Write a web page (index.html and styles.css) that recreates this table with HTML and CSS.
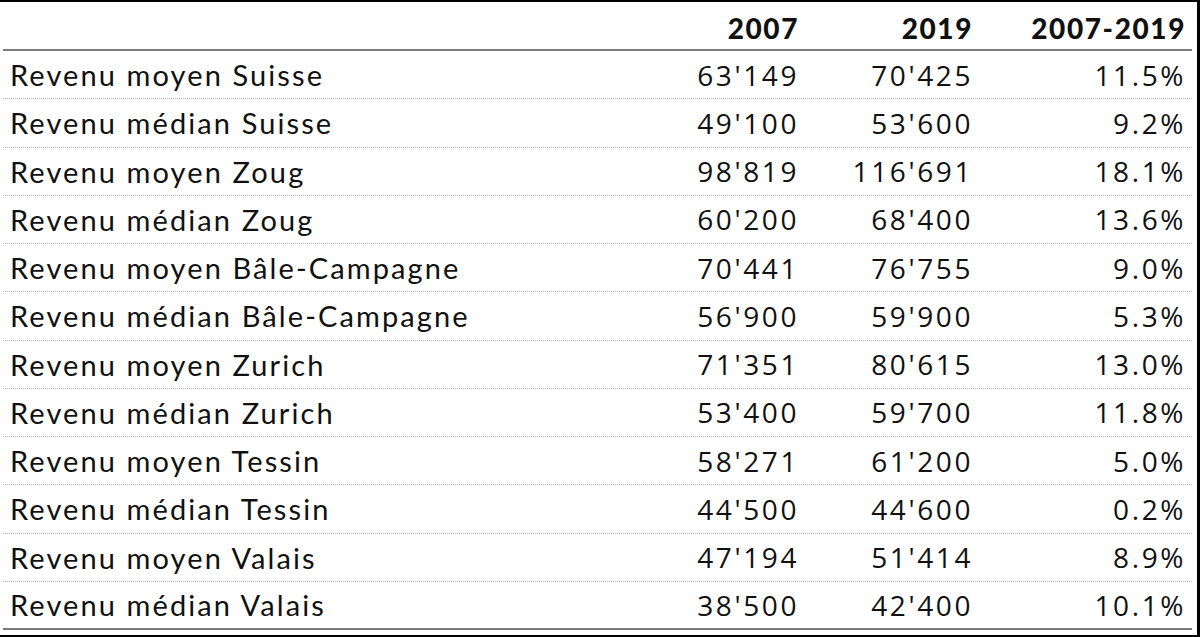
FILE: index.html
```html
<!DOCTYPE html>
<html lang="fr">
<head>
<meta charset="utf-8">
<title>Revenus</title>
<link rel="stylesheet" href="styles.css">
</head>
<body>
<div class="frame">
  <div class="row head">
    <div class="cell label"></div>
    <div class="cell num">2007</div>
    <div class="cell num">2019</div>
    <div class="cell num">2007-2019</div>
  </div>
  <div class="row"><div class="cell label">Revenu moyen Suisse</div><div class="cell num">63'149</div><div class="cell num">70'425</div><div class="cell num">11.5%</div></div>
  <div class="row"><div class="cell label">Revenu médian Suisse</div><div class="cell num">49'100</div><div class="cell num">53'600</div><div class="cell num">9.2%</div></div>
  <div class="row"><div class="cell label">Revenu moyen Zoug</div><div class="cell num">98'819</div><div class="cell num">116'691</div><div class="cell num">18.1%</div></div>
  <div class="row"><div class="cell label">Revenu médian Zoug</div><div class="cell num">60'200</div><div class="cell num">68'400</div><div class="cell num">13.6%</div></div>
  <div class="row"><div class="cell label">Revenu moyen Bâle-Campagne</div><div class="cell num">70'441</div><div class="cell num">76'755</div><div class="cell num">9.0%</div></div>
  <div class="row"><div class="cell label">Revenu médian Bâle-Campagne</div><div class="cell num">56'900</div><div class="cell num">59'900</div><div class="cell num">5.3%</div></div>
  <div class="row"><div class="cell label">Revenu moyen Zurich</div><div class="cell num">71'351</div><div class="cell num">80'615</div><div class="cell num">13.0%</div></div>
  <div class="row"><div class="cell label">Revenu médian Zurich</div><div class="cell num">53'400</div><div class="cell num">59'700</div><div class="cell num">11.8%</div></div>
  <div class="row"><div class="cell label">Revenu moyen Tessin</div><div class="cell num">58'271</div><div class="cell num">61'200</div><div class="cell num">5.0%</div></div>
  <div class="row"><div class="cell label">Revenu médian Tessin</div><div class="cell num">44'500</div><div class="cell num">44'600</div><div class="cell num">0.2%</div></div>
  <div class="row"><div class="cell label">Revenu moyen Valais</div><div class="cell num">47'194</div><div class="cell num">51'414</div><div class="cell num">8.9%</div></div>
  <div class="row last"><div class="cell label">Revenu médian Valais</div><div class="cell num">38'500</div><div class="cell num">42'400</div><div class="cell num">10.1%</div></div>
</div>
</body>
</html>
```

FILE: styles.css
```css
html, body {
  margin: 0;
  padding: 0;
  background: #ffffff;
}

.frame {
  width: 1200px;
  height: 637px;
  box-sizing: border-box;
  border-top: 2px solid #000;
  border-right: 3px solid #000;
  border-bottom: 2px solid #000;
  padding: 0 5px 0 3px;
  color: #111;
}

.row {
  display: grid;
  grid-template-columns: 632px 170px 174px 213px;
  height: 48.25px;
  box-sizing: border-box;
  border-bottom: 1px dotted #b0b0b0;
  align-items: center;
}

.row.head {
  height: 49px;
  border-bottom: 2px solid #7c7c7c;
}

.row.last {
  border-bottom: 2px solid #7c7c7c;
}

.cell {
  white-space: nowrap;
}

.label {
  padding-left: 7px;
  font-family: Lato, "Open Sans", sans-serif;
  font-size: 29px;
  letter-spacing: 2.1px;
}

.num {
  text-align: right;
  padding-right: 6px;
  font-family: "Open Sans", sans-serif;
  font-size: 28px;
  letter-spacing: 2.6px;
}

.head .num {
  font-family: Lato, "Open Sans", sans-serif;
  font-weight: 900;
  letter-spacing: 1.6px;
  padding-top: 4px;
}
```
